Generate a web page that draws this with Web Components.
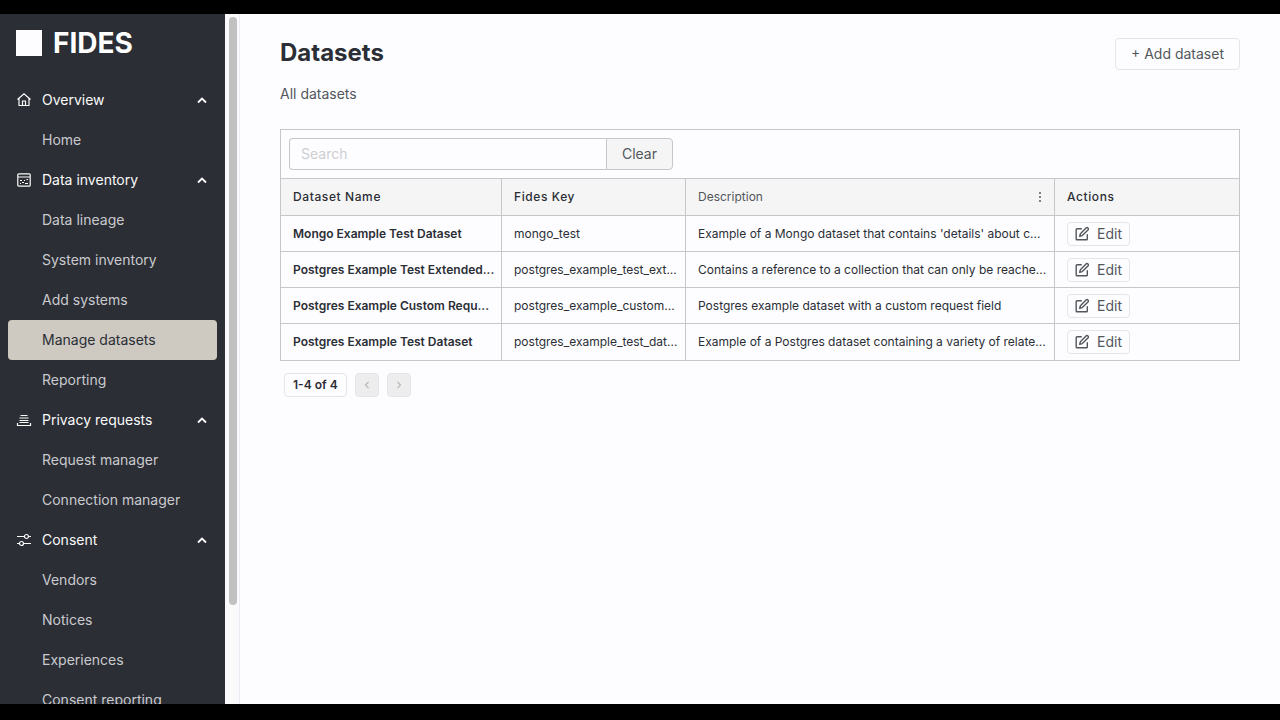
<!DOCTYPE html>
<html lang="en">
<head>
<meta charset="utf-8">
<meta name="viewport" content="width=device-width, initial-scale=1">
<title>Datasets</title>
<style>
    :root {
        --ink: #2b2e35;
        --text: #53575c;
        --line: #c6c7ca;
        --soft-line: #e4e5e8;
        --fill: #f5f5f5;
    }
    body {
        margin: 0;
        background: #000;
        font-family: Inter, "Liberation Sans", sans-serif;
        font-size: 14px;
        line-height: 20px;
        color: var(--ink);
    }
</style>
</head>
<body>
<fides-app>
    <side-nav slot="nav">
        <nav-group label="Overview" icon="home">
            <nav-item>Home</nav-item>
        </nav-group>
        <nav-group label="Data inventory" icon="inventory">
            <nav-item>Data lineage</nav-item>
            <nav-item>System inventory</nav-item>
            <nav-item>Add systems</nav-item>
            <nav-item active>Manage datasets</nav-item>
            <nav-item>Reporting</nav-item>
        </nav-group>
        <nav-group label="Privacy requests" icon="requests">
            <nav-item>Request manager</nav-item>
            <nav-item>Connection manager</nav-item>
        </nav-group>
        <nav-group label="Consent" icon="consent">
            <nav-item>Vendors</nav-item>
            <nav-item>Notices</nav-item>
            <nav-item>Experiences</nav-item>
            <nav-item>Consent reporting</nav-item>
        </nav-group>
    </side-nav>
    <page-header heading="Datasets" action="+ Add dataset">All datasets</page-header>
    <dataset-table></dataset-table>
    <page-footer>1-4 of 4</page-footer>
</fides-app>

<script>
const ICONS = {
    home: '<path d="M1.500 7.500 8 1.800l6.500 5.700M3 6.500V13.500H13V6.500M6.500 13.500V9H9.500V13.500"/>',
    inventory: '<rect x="1.800" y="1.800" width="12.400" height="12.400" rx="1"/><path d="M2 5H14M4 8.500H6M8 8.500H9M10.500 7.500H12M4 11.500H5M6 10.500H8M9 11.500H12"/>',
    requests: '<path d="M4.500 3.500H11.500M3.500 6H12.500M3.500 8.500H12.500M3.500 10.500H12.500M1.500 11V13.500H14.500V11"/>',
    consent: '<path d="M1 4.500H8.500M12.500 4.500H15M1 11.500H3.500M7.500 11.500H15"/><circle cx="10.500" cy="4.500" r="2"/><circle cx="5.500" cy="11.500" r="2"/>',
    chevron: '<path d="m4 10.500 4-4 4 4" stroke-width="1.800"/>',
    edit: '<g stroke-width="1.400" stroke-linejoin="round" stroke-linecap="round"><path d="M7.300 2.700H3a.8.8 0 0 0-.8.8v9.500a.8.8 0 0 0 .8.8h9.500a.8.8 0 0 0 .8-.8V8.700"/><path d="M12 1.900a1.300 1.300 0 0 1 2 2L8.300 9.600l-2.600.7.700-2.600z"/></g>',
    left: '<path d="M9.500 5 6.500 8l3 3"/>',
    right: '<path d="m6.500 5 3 3-3 3"/>'
};

const icon = (name) => `<svg width="16" height="16" viewBox="0 0 16 16" fill="none" stroke="currentColor" stroke-width="1.200" aria-hidden="true">${ICONS[name]}</svg>`;

// base class, every element only supplies its template
class FidesElement extends HTMLElement {
    constructor() {
        super();
        this.attachShadow({ mode: 'open' });
    }

    connectedCallback() {
        this.shadowRoot.innerHTML = this.template();
    }
}

class FidesApp extends FidesElement {
    template() {
        return `
            <style>
                :host {
                    display: block;
                    box-sizing: border-box;
                    height: 100vh;
                    padding: 14px 0 16px;
                }
                .shell {
                    display: flex;
                    height: 100%;
                    background: #fdfdff;
                }
                main {
                    flex: 1;
                    min-width: 0;
                    padding: 24px 40px;
                    overflow: hidden;
                }
            </style>
            <div class="shell">
                <slot name="nav"></slot>
                <main><slot></slot></main>
            </div>
        `;
    }
}

class SideNav extends FidesElement {
    template() {
        return `
            <style>
                :host {
                    display: flex;
                    flex: none;
                    width: 240px;
                    overflow: hidden;
                }
                nav {
                    flex: 1;
                    padding: 0 8px;
                    overflow: hidden;
                    background: var(--ink);
                }
                .logo {
                    display: flex;
                    align-items: center;
                    gap: 11px;
                    height: 58px;
                    margin-bottom: 8px;
                    padding-left: 8px;
                    font-size: 28px;
                    font-weight: 700;
                    line-height: 32px;
                    color: #fff;
                }
                .mark {
                    width: 26px;
                    height: 26px;
                    background: #fdfdff;
                }
                .track {
                    box-sizing: border-box;
                    width: 15px;
                    padding: 3px 2px 3px 4px;
                    background: #fafafa;
                    border-right: 1px solid #ececf4;
                }
                .thumb {
                    height: 86%;
                    border-radius: 4px;
                    background: #c1c1c1;
                }
            </style>
            <nav>
                <div class="logo"><span class="mark"></span>FIDES</div>
                <slot></slot>
            </nav>
            <div class="track"><div class="thumb"></div></div>
        `;
    }
}

class NavGroup extends FidesElement {
    template() {
        return `
            <style>
                :host { display: block; }
                button {
                    display: flex;
                    align-items: center;
                    gap: 10px;
                    width: 100%;
                    height: 40px;
                    padding: 0 7px 0 8px;
                    border: 0;
                    background: none;
                    font: inherit;
                    color: #fafafa;
                    text-align: left;
                }
                span { flex: 1; }
            </style>
            <button type="button" aria-expanded="true">
                ${icon(this.getAttribute('icon'))}
                <span>${this.getAttribute('label')}</span>
                ${icon('chevron')}
            </button>
            <slot></slot>
        `;
    }
}

class NavItem extends FidesElement {
    template() {
        return `
            <style>
                :host { display: block; }
                a {
                    display: flex;
                    align-items: center;
                    height: 40px;
                    padding-left: 34px;
                    border-radius: 4px;
                    color: #cacace;
                    text-decoration: none;
                }
                :host([active]) a {
                    background: #cecac2;
                    color: var(--ink);
                }
            </style>
            <a href="#"><slot></slot></a>
        `;
    }
}

class PageHeader extends FidesElement {
    template() {
        return `
            <style>
                :host { display: block; margin-bottom: 25px; }
                .top {
                    display: flex;
                    justify-content: space-between;
                    align-items: flex-start;
                    margin-bottom: 14px;
                }
                h1 {
                    margin: 0;
                    font-size: 24px;
                    line-height: 30px;
                    font-weight: 700;
                }
                button {
                    height: 32px;
                    padding: 0 15px;
                    border: 1px solid var(--soft-line);
                    border-radius: 4px;
                    background: none;
                    font: inherit;
                    color: var(--text);
                }
                p { margin: 0; color: var(--text); }
            </style>
            <div class="top">
                <h1>${this.getAttribute('heading')}</h1>
                <button type="button">${this.getAttribute('action')}</button>
            </div>
            <p><slot></slot></p>
        `;
    }
}

class SearchBar extends FidesElement {
    template() {
        return `
            <style>
                :host { display: block; padding: 8px; }
                form { display: flex; width: 384px; height: 32px; }
                input, button {
                    box-sizing: border-box;
                    border: 1px solid var(--line);
                    font: inherit;
                }
                input {
                    flex: 1;
                    min-width: 0;
                    padding: 0 11px;
                    border-right: 0;
                    border-radius: 4px 0 0 4px;
                    background: none;
                }
                input::placeholder { color: #cdced1; }
                button {
                    padding: 0 15px;
                    border-radius: 0 4px 4px 0;
                    background: var(--fill);
                    color: var(--text);
                }
            </style>
            <form>
                <input type="text" placeholder="Search" aria-label="Search">
                <button type="button">Clear</button>
            </form>
        `;
    }
}

class EditButton extends FidesElement {
    template() {
        return `
            <style>
                :host { display: flex; }
                button {
                    display: flex;
                    align-items: center;
                    gap: 7px;
                    height: 24px;
                    padding: 0 7px 0 6px;
                    border: 1px solid var(--soft-line);
                    border-radius: 4px;
                    background: none;
                    font: inherit;
                    font-size: 14px;
                    color: var(--text);
                }
            </style>
            <button type="button">${icon('edit')}<slot></slot></button>
        `;
    }
}

class DatasetTable extends FidesElement {
    constructor() {
        super();
        this.rows = [
            ['Mongo Example Test Dataset', 'mongo_test', "Example of a Mongo dataset that contains 'details' about c..."],
            ['Postgres Example Test Extended...', 'postgres_example_test_ext...', 'Contains a reference to a collection that can only be reache...'],
            ['Postgres Example Custom Requ...', 'postgres_example_custom...', 'Postgres example dataset with a custom request field'],
            ['Postgres Example Test Dataset', 'postgres_example_test_dat...', 'Example of a Postgres dataset containing a variety of relate...']
        ];
    }

    template() {
        const rows = this.rows.map(([name, key, description]) => `
            <tr>
                <td class="name">${name}</td>
                <td>${key}</td>
                <td>${description}</td>
                <td><edit-button>Edit</edit-button></td>
            </tr>
        `).join('');

        return `
            <style>
                :host { display: block; border: 1px solid var(--line); }
                table {
                    width: 100%;
                    table-layout: fixed;
                    border-collapse: separate;
                    border-spacing: 0;
                    font-size: 12px;
                    line-height: 16px;
                }
                .w-name { width: 221px; }
                .w-key, .w-actions { width: 184px; }
                th, td {
                    box-sizing: border-box;
                    height: 36px;
                    padding: 0 0 0 12px;
                    border-top: 1px solid var(--line);
                    border-right: 1px solid var(--line);
                    text-align: left;
                    white-space: nowrap;
                }
                th {
                    height: 37px;
                    background: var(--fill);
                    font-weight: 500;
                    letter-spacing: 0.05em;
                }
                th.plain { font-weight: 400; letter-spacing: normal; color: var(--text); }
                th:last-child, td:last-child { border-right: 0; }
                tbody tr:last-child td { height: 37px; }
                .name { font-weight: 600; }
                .menu { display: flex; justify-content: space-between; align-items: center; padding-right: 12px; }
                .menu svg { display: block; }
            </style>
            <search-bar></search-bar>
            <table>
                <colgroup><col class="w-name"><col class="w-key"><col><col class="w-actions"></colgroup>
                <thead>
                    <tr>
                        <th>Dataset Name</th>
                        <th>Fides Key</th>
                        <th class="plain">
                            <div class="menu">Description
                                <svg width="4" height="12" viewBox="0 0 4 12" fill="currentColor"><circle cx="2" cy="2" r="1"/><circle cx="2" cy="6" r="1"/><circle cx="2" cy="10" r="1"/></svg>
                            </div>
                        </th>
                        <th>Actions</th>
                    </tr>
                </thead>
                <tbody>${rows}</tbody>
            </table>
        `;
    }
}

class PageFooter extends FidesElement {
    template() {
        return `
            <style>
                :host {
                    display: flex;
                    gap: 8px;
                    padding: 12px 4px;
                    font-size: 12px;
                    font-weight: 600;
                }
                .range, button {
                    display: flex;
                    align-items: center;
                    justify-content: center;
                    box-sizing: border-box;
                    height: 24px;
                    border: 1px solid var(--soft-line);
                    border-radius: 4px;
                }
                .range { padding: 0 8px; }
                button {
                    width: 24px;
                    padding: 0;
                    background: #ededed;
                    color: #b8b9bc;
                }
            </style>
            <div class="range"><slot></slot></div>
            <button type="button" disabled aria-label="Previous page">${icon('left')}</button>
            <button type="button" disabled aria-label="Next page">${icon('right')}</button>
        `;
    }
}

customElements.define('fides-app', FidesApp);
customElements.define('side-nav', SideNav);
customElements.define('nav-group', NavGroup);
customElements.define('nav-item', NavItem);
customElements.define('page-header', PageHeader);
customElements.define('search-bar', SearchBar);
customElements.define('edit-button', EditButton);
customElements.define('dataset-table', DatasetTable);
customElements.define('page-footer', PageFooter);
</script>
</body>
</html>
